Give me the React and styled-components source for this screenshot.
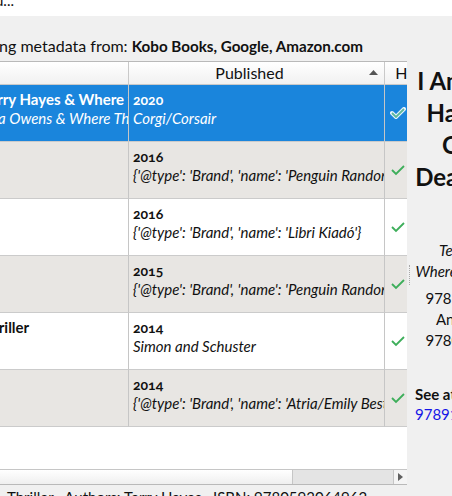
import React from "react";
import styled, { createGlobalStyle } from "styled-components";

const GlobalStyle = createGlobalStyle`
  html, body {
    margin: 0;
    padding: 0;
    background: #f0f0f0;
    overflow: hidden;
    font-family: Lato, "Open Sans", "Liberation Sans", sans-serif;
    color: #111;
  }
`;

const rows = [
  {
    title: "I Am Pilgrim: Terry Hayes & Where the Crawdads Sing",
    authors: "Terry Hayes, Delia Owens & Where The Crawdads",
    year: "2020",
    publisher: "Corgi/Corsair",
    selected: true,
  },
  { title: "", authors: "", year: "2016", publisher: "{'@type': 'Brand', 'name': 'Penguin Random House'}" },
  { title: "", authors: "", year: "2016", publisher: "{'@type': 'Brand', 'name': 'Libri Kiadó'}" },
  { title: "", authors: "", year: "2015", publisher: "{'@type': 'Brand', 'name': 'Penguin Random House'}" },
  { title: "A Tenser Spy Thriller", authors: "", year: "2014", publisher: "Simon and Schuster" },
  { title: "", authors: "", year: "2014", publisher: "{'@type': 'Brand', 'name': 'Atria/Emily Bestler Books'}" },
];

const Check = ({ selected }) => (
  <svg width="16" height="12" viewBox="0 0 16 12">
    {selected && (
      <polyline points="2,6 6,10 14,2" fill="none" stroke="#e8f4ff" strokeWidth="4" strokeLinecap="round" />
    )}
    <polyline
      points="2,6 6,10 14,2"
      fill="none"
      stroke={selected ? "#5cb89a" : "#3dae5a"}
      strokeWidth="1.8"
    />
  </svg>
);

const SortArrow = () => (
  <svg width="9" height="5" viewBox="0 0 9 5">
    <polygon points="0,5 4.5,0 9,5" fill="#555" />
  </svg>
);

const RightArrow = () => (
  <svg width="5" height="8" viewBox="0 0 5 8">
    <polygon points="0,0 5,4 0,8" fill="#606060" />
  </svg>
);

export default function App() {
  return (
    <>
      <GlobalStyle />
      <TopStrip>
        <StatusLine>Please wait while metadata is being downloaded...</StatusLine>
      </TopStrip>
      <Main>
        <LeftSide>
          <SourceLabel>
            Downloading metadata from: <b>Kobo Books, Google, Amazon.com</b>
          </SourceLabel>
          <Table>
            <Grid>
              <HeaderCell $align="left">Title</HeaderCell>
              <HeaderCell $sorted>
                Published
                <SortSlot>
                  <SortArrow />
                </SortSlot>
              </HeaderCell>
              <HeaderCell $last>Has cover</HeaderCell>
              {rows.map((r, i) => (
                <React.Fragment key={i}>
                  <Cell $selected={r.selected} $alt={i % 2 === 1}>
                    <Bold>{r.title}</Bold>
                    <Italic>{r.authors}</Italic>
                  </Cell>
                  <Cell $selected={r.selected} $alt={i % 2 === 1}>
                    <Year>{r.year}</Year>
                    <Italic>{r.publisher}</Italic>
                  </Cell>
                  <CoverCell $selected={r.selected} $alt={i % 2 === 1} $last>
                    <Check selected={r.selected} />
                  </CoverCell>
                </React.Fragment>
              ))}
            </Grid>
            <Filler />
            <HScroll>
              <Thumb />
              <Track />
              <ArrowButton>
                <RightArrow />
              </ArrowButton>
            </HScroll>
          </Table>
          <Summary>
            Thriller&nbsp;&nbsp; Authors: Terry Hayes&nbsp;&nbsp; ISBN: 9780593064962
          </Summary>
        </LeftSide>
        <Splitter>
          <Handle />
        </Splitter>
        <Details>
          <BookTitle>
            <span>I Am Pilgrim</span>
            <span>Hayes and</span>
            <span>Cradles</span>
            <span>Death Game</span>
          </BookTitle>
          <Meta>
            <MetaItalic>Terry Hayes &amp;</MetaItalic>
            <MetaItalic>Where The Crawdads</MetaItalic>
          </Meta>
          <Meta>
            <span>9781784160869</span>
            <span>Anchor Books</span>
            <span>9780593064962</span>
          </Meta>
          <SeeAlso>
            <b>See at</b>
            <Link>9789100178292</Link>
          </SeeAlso>
        </Details>
      </Main>
    </>
  );
}

const TopStrip = styled.div`
  height: 16px;
  background: #fff;
  overflow: hidden;
`;

const StatusLine = styled.div`
  margin-left: -316px;
  margin-top: -9px;
  width: 330px;
  text-align: right;
  font-size: 15px;
  white-space: nowrap;
`;

const Main = styled.div`
  display: flex;
  align-items: flex-start;
`;

const LeftSide = styled.div`
  flex: 0 0 407px;
  display: flex;
  flex-direction: column;
  overflow: hidden;
`;

const SourceLabel = styled.div`
  margin: 21px 0 0 -77px;
  height: 24px;
  line-height: 18px;
  font-size: 16px;
  white-space: nowrap;
  b {
    font-weight: 700;
    font-size: 15.2px;
  }
`;

const Table = styled.div`
  margin-left: -111px;
  width: 517px;
  border: 1px solid #b9b9b9;
  background: #fff;
  display: flex;
  flex-direction: column;
  overflow: hidden;
`;

const Grid = styled.div`
  display: grid;
  grid-template-columns: 239px 256px 90px;
`;

const HeaderCell = styled.div`
  position: relative;
  height: 22px;
  line-height: 22px;
  font-size: 16px;
  padding: ${(p) => (p.$sorted ? "0 18px 0 4px" : "0 4px")};
  text-align: ${(p) => p.$align || "center"};
  background: linear-gradient(#ffffff, #f1f1f1);
  border-bottom: 1px solid #c9c9c9;
  border-right: ${(p) => (p.$last ? "none" : "1px solid #c9c9c9")};
  white-space: nowrap;
  overflow: hidden;
`;

const SortSlot = styled.span`
  position: absolute;
  right: 6px;
  top: 7px;
  line-height: 0;
`;

const Cell = styled.div`
  height: 57px;
  padding: 5px 4px 0;
  box-sizing: border-box;
  display: flex;
  flex-direction: column;
  white-space: nowrap;
  overflow: hidden;
  color: ${(p) => (p.$selected ? "#fff" : "#111")};
  background: ${(p) => (p.$selected ? "#1a85dc" : p.$alt ? "#e8e6e3" : "#fff")};
  border-bottom: 1px solid #cbcbcb;
  border-right: ${(p) => (p.$last ? "none" : "1px solid #c6c6c6")};
`;

const CoverCell = styled(Cell)`
  padding: 0 0 0 5px;
  justify-content: center;
`;

const Bold = styled.span`
  font-weight: 700;
  font-size: 15px;
  line-height: 19px;
  height: 19px;
`;

const Year = styled.span`
  font-weight: 700;
  font-size: 14px;
  line-height: 19px;
  height: 19px;
  font-feature-settings: "onum";
`;

const Italic = styled.span`
  font-style: italic;
  font-size: 15px;
  line-height: 19px;
`;

const Filler = styled.div`
  height: 42px;
`;

const HScroll = styled.div`
  display: flex;
  height: 14px;
  border-top: 1px solid #c6c6c6;
`;

const Thumb = styled.div`
  flex: 0 0 402px;
  background: linear-gradient(#ffffff, #efefef);
  border-right: 1px solid #c6c6c6;
`;

const Track = styled.div`
  flex: 0 0 100px;
  background: #e4e4e4;
`;

const ArrowButton = styled.div`
  flex: 1;
  display: flex;
  align-items: center;
  justify-content: center;
  background: #f4f4f4;
  border-left: 1px solid #c6c6c6;
`;

const Summary = styled.div`
  margin-top: 3px;
  padding-left: 7px;
  font-size: 15px;
  line-height: 18px;
  white-space: nowrap;
`;

const Splitter = styled.div`
  flex: 0 0 5px;
  display: flex;
  justify-content: center;
  padding-top: 249px;
`;

const Handle = styled.div`
  width: 0;
  height: 20px;
  border-left: 1px dotted #a8a8a8;
`;

const Details = styled.div`
  flex: 0 0 140px;
  display: flex;
  flex-direction: column;
  padding-top: 49px;
`;

const BookTitle = styled.div`
  display: flex;
  flex-direction: column;
  align-items: center;
  font-size: 24px;
  font-weight: 700;
  line-height: 32px;
  white-space: nowrap;
`;

const Meta = styled.div`
  display: flex;
  flex-direction: column;
  align-items: center;
  margin-top: 47px;
  font-size: 15px;
  line-height: 21px;
  white-space: nowrap;
  & + & {
    margin-top: 6px;
  }
`;

const MetaItalic = styled.span`
  font-style: italic;
`;

const SeeAlso = styled.div`
  display: flex;
  flex-direction: column;
  margin-top: 33px;
  padding-left: 3px;
  font-size: 15px;
  line-height: 20px;
  white-space: nowrap;
`;

const Link = styled.span`
  color: #1515e6;
`;
